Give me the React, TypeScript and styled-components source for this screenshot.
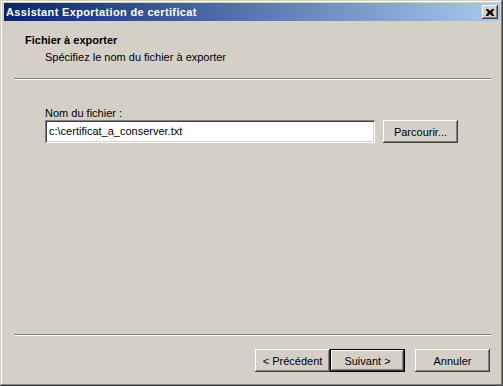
import React from 'react';
import styled, { createGlobalStyle } from 'styled-components';

const GlobalStyle = createGlobalStyle`
  html, body {
    margin: 0;
    padding: 0;
    background: #d4d0c8;
  }
  body {
    font-family: Tahoma, "Liberation Sans", Arial, sans-serif;
    font-size: 11px;
    color: #000;
  }
`;

const bevelOut = `
  box-shadow: inset -1px -1px #404040, inset 1px 1px #fff, inset -2px -2px #808080, inset 2px 2px #d4d0c8;
`;

const Window = styled.div`
  width: 503px;
  height: 386px;
  box-sizing: border-box;
  background: #d4d0c8;
  padding: 3px 3px 3px 4px;
  display: flex;
  flex-direction: column;
  box-shadow: inset -1px -1px #404040, inset 1px 1px #d4d0c8, inset -2px -2px #808080, inset 2px 2px #fff;
`;

const TitleBar = styled.div`
  height: 18px;
  display: flex;
  align-items: center;
  justify-content: space-between;
  padding: 0 2px 0 2px;
  background: linear-gradient(to right, #0a246a, #a6caf0);
`;

const TitleText = styled.span`
  color: #fff;
  font-weight: bold;
  font-size: 11px;
  letter-spacing: 0.35px;
`;

const CloseButton = styled.div`
  width: 16px;
  height: 14px;
  background: #d4d0c8;
  display: flex;
  align-items: center;
  justify-content: center;
  ${bevelOut}
`;

const Header = styled.div`
  padding: 12px 0 0 21px;
  height: 45px;
`;

const HeaderTitle = styled.div`
  font-weight: bold;
  line-height: 14px;
`;

const HeaderSubtitle = styled.div`
  padding-left: 20px;
  margin-top: 3px;
  line-height: 14px;
`;

const Separator = styled.div`
  margin: 0 9px 0 10px;
  height: 0;
  border-top: 1px solid #808080;
  border-bottom: 1px solid #fff;
`;

const Body = styled.div`
  flex: 1;
  padding: 26px 0 0 41px;
`;

const Label = styled.div`
  line-height: 14px;
`;

const FieldRow = styled.div`
  display: flex;
  gap: 8px;
`;

const TextInput = styled.div`
  width: 330px;
  height: 23px;
  box-sizing: border-box;
  background: #fff;
  padding: 4px 0 0 4px;
  line-height: 14px;
  box-shadow: inset 1px 1px #808080, inset -1px -1px #fff, inset 2px 2px #404040, inset -2px -2px #d4d0c8;
`;

const Button = styled.div<{ $default?: boolean }>`
  width: 75px;
  height: 23px;
  box-sizing: border-box;
  display: flex;
  align-items: center;
  justify-content: center;
  background: #d4d0c8;
  ${(p) =>
    p.$default
      ? `box-shadow: inset 0 0 0 1px #000, inset -2px -2px #404040, inset 2px 2px #fff, inset -3px -3px #808080;`
      : bevelOut}
`;

const Footer = styled.div`
  display: flex;
  justify-content: flex-end;
  padding: 13px 10px 11px 0;
`;

const ButtonGroup = styled.div`
  display: flex;
  margin-right: 10px;
`;

export default function App() {
  return (
    <>
      <GlobalStyle />
      <Window>
        <TitleBar>
          <TitleText>Assistant Exportation de certificat</TitleText>
          <CloseButton>
            <svg width="8" height="7" viewBox="0 0 8 7">
              <path d="M0 0h2l2 2 2-2h2v1L6 3.5 8 6v1H6L4 5 2 7H0V6l2-2.5L0 1z" fill="#000" />
            </svg>
          </CloseButton>
        </TitleBar>
        <Header>
          <HeaderTitle>Fichier à exporter</HeaderTitle>
          <HeaderSubtitle>Spécifiez le nom du fichier à exporter</HeaderSubtitle>
        </Header>
        <Separator />
        <Body>
          <Label>Nom du fichier :</Label>
          <FieldRow>
            <TextInput>c:\certificat_a_conserver.txt</TextInput>
            <Button>Parcourir...</Button>
          </FieldRow>
        </Body>
        <Separator />
        <Footer>
          <ButtonGroup>
            <Button>&lt; Précédent</Button>
            <Button $default>Suivant &gt;</Button>
          </ButtonGroup>
          <Button>Annuler</Button>
        </Footer>
      </Window>
    </>
  );
}
